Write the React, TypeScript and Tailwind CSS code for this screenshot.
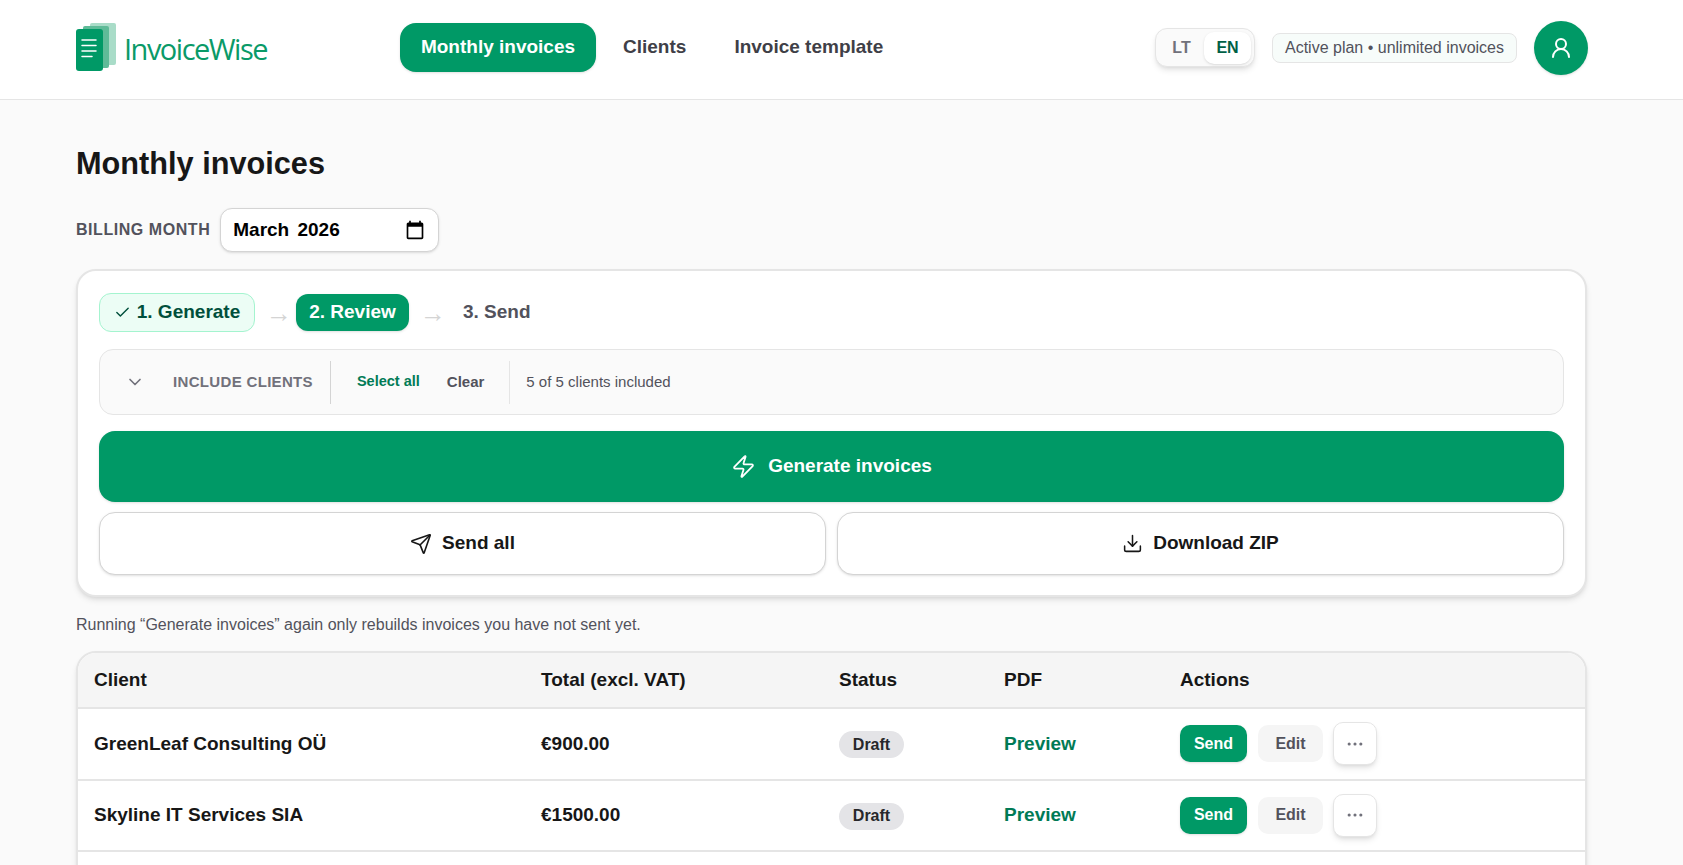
import React from 'react';
import { Check, ChevronDown, Download, Ellipsis, Send, UserRound, Zap } from 'lucide-react';

const rows = [
  { client: 'GreenLeaf Consulting OÜ', total: '€900.00' },
  { client: 'Skyline IT Services SIA', total: '€1500.00' },
];

const Logo = () => (
  <div className="flex items-center gap-[7px]">
    <svg width="41" height="48" viewBox="0 0 41 48" className="mb-[2px]">
      <rect x="14" y="0" width="26" height="42" rx="2" fill="#a9dcc8" />
      <rect x="7" y="3" width="26" height="42" rx="2" fill="#5fbb98" />
      <rect x="0" y="6" width="27" height="42" rx="3" fill="#009966" />
      <path d="M6 17h14M6 22.5h14M6 28h14M6 33.5h10" stroke="#fff" strokeWidth="1.5" strokeLinecap="round" />
    </svg>
    <span className="mt-[1px] font-['Open_Sans',sans-serif] text-[29px] font-medium leading-none tracking-[-1.5px] text-[#0a9a68]">InvoiceWise</span>
  </div>
);

const Header = () => (
  <header className="h-[100px] border-b border-neutral-200 bg-white">
    <div className="ml-[76px] flex h-[95px] w-[1512px] items-center">
      <Logo />
      <nav className="ml-[133px] flex items-center gap-[6px] text-[19px] font-bold text-zinc-700">
        <a className="flex h-[49px] w-[196px] items-center justify-center rounded-[16px] bg-emerald-600 text-white shadow-sm">Monthly invoices</a>
        <a className="px-[21px]">Clients</a>
        <a className="px-[21px]">Invoice template</a>
      </nav>
      <div className="ml-auto flex items-center">
        <div className="flex h-[39px] w-[100px] items-center rounded-[12px] border border-neutral-200 bg-neutral-50 p-[3px] text-[16px] font-bold shadow-md">
          <span className="w-[47px] text-center text-zinc-500">LT</span>
          <span className="flex h-[32px] w-[49px] items-center justify-center rounded-[10px] bg-white text-emerald-800 shadow-sm">EN</span>
        </div>
        <div className="ml-[17px] flex h-[30px] w-[245px] items-center justify-center rounded-[8px] border border-neutral-200 bg-[#f7fcfa] text-[16px] text-zinc-600">Active plan • unlimited invoices</div>
        <div className="ml-[17px] flex h-[54px] w-[54px] items-center justify-center rounded-full bg-emerald-600 text-white shadow-sm">
          <UserRound size={24} strokeWidth={2} />
        </div>
      </div>
    </div>
  </header>
);

const Arrow = () => (
  <span className="mx-[11px] w-[19px] text-center text-[26px] font-normal leading-none text-neutral-300">→</span>
);

const Stepper = () => (
  <div className="flex h-[39px] items-center text-[19px] font-bold">
    <div className="flex h-[39px] w-[156px] items-center justify-center gap-[6px] rounded-[12px] border border-emerald-200 bg-emerald-50 text-emerald-900">
      <Check size={17} strokeWidth={2} />
      <span>1. Generate</span>
    </div>
    <Arrow />
    <div className="flex h-[37px] w-[113px] items-center justify-center rounded-[12px] bg-emerald-600 text-white shadow-sm">2. Review</div>
    <Arrow />
    <div className="ml-[13px] text-zinc-600">3. Send</div>
  </div>
);

const IncludeClients = () => (
  <div className="mt-[17px] flex h-[66px] items-center rounded-[14px] border border-neutral-200 bg-neutral-50">
    <ChevronDown size={20} className="ml-[25px] text-zinc-500" />
    <span className="ml-[28px] text-[15px] font-bold tracking-[0.33px] text-zinc-500">INCLUDE CLIENTS</span>
    <div className="ml-[17px] h-[43px] w-px bg-neutral-300" />
    <span className="ml-[26px] text-[14.5px] font-bold text-emerald-700">Select all</span>
    <span className="ml-[27px] text-[15px] font-bold text-zinc-600">Clear</span>
    <div className="ml-[25px] h-[43px] w-px bg-neutral-200" />
    <span className="ml-[16px] text-[15px] text-zinc-600">5 of 5 clients included</span>
  </div>
);

const MoreButton = () => (
  <button className="flex h-[43px] w-[44px] items-center justify-center rounded-[10px] border border-neutral-200 bg-white text-zinc-500 shadow-md">
    <Ellipsis size={20} strokeWidth={1.75} />
  </button>
);

const Actions = () => (
  <div className="flex items-center">
    <button className="h-[37px] w-[67px] rounded-[10px] bg-emerald-600 text-[16px] font-bold text-white shadow-sm">Send</button>
    <button className="ml-[11px] mr-[10px] h-[37px] w-[65px] rounded-[10px] bg-neutral-100 text-[16px] font-bold text-zinc-600">Edit</button>
    <MoreButton />
  </div>
);

const CalendarIcon = () => (
  <svg width="20" height="20" viewBox="0 0 24 24" fill="currentColor">
    <path d="M20 3h-1V1h-2v2H7V1H5v2H4c-1.1 0-2 .9-2 2v16c0 1.1.9 2 2 2h16c1.1 0 2-.9 2-2V5c0-1.1-.9-2-2-2zm0 18H4V8h16v13z" />
  </svg>
);

export default function App() {
  return (
    <div className="h-screen overflow-hidden bg-neutral-50 font-['Liberation_Sans',Arial,sans-serif] text-neutral-900">
      <Header />
      <main className="ml-[76px] w-[1511px]">
        <h1 className="mt-[44px] text-[30.7px] font-bold leading-[40px]">Monthly invoices</h1>
        <div className="mt-[24px] flex items-center gap-[10px]">
          <label className="text-[16px] font-bold tracking-[0.55px] text-zinc-600">BILLING MONTH</label>
          <div className="flex h-[44px] w-[219px] items-center justify-between rounded-[12px] border border-neutral-300 bg-white pl-[12px] pr-[13px] text-[19px] font-bold text-black shadow-sm [word-spacing:3px]">
            March 2026
            <CalendarIcon />
          </div>
        </div>

        <section className="mt-[17px] h-[328px] rounded-[20px] border-2 border-neutral-200 bg-white px-[21px] pt-[22px] shadow-md">
          <Stepper />
          <IncludeClients />
          <button className="mt-[16px] flex h-[71px] w-full items-center justify-center gap-[12px] rounded-[16px] bg-emerald-600 text-[19px] font-bold text-white shadow-sm">
            <Zap size={25} strokeWidth={1.75} />
            Generate invoices
          </button>
          <div className="mt-[10px] grid grid-cols-2 gap-[11px]">
            <button className="flex h-[63px] items-center justify-center gap-[10px] rounded-[16px] border border-neutral-300 bg-white text-[19px] font-bold shadow-sm">
              <Send size={22} strokeWidth={1.75} />
              Send all
            </button>
            <button className="flex h-[63px] items-center justify-center gap-[10px] rounded-[16px] border border-neutral-300 bg-white text-[19px] font-bold shadow-sm">
              <Download size={21} strokeWidth={1.75} />
              Download ZIP
            </button>
          </div>
        </section>

        <p className="mt-[18px] text-[16px] leading-[20px] text-zinc-600">Running “Generate invoices” again only rebuilds invoices you have not sent yet.</p>

        <div className="mt-[16px] overflow-hidden rounded-[20px] border-2 border-neutral-200 bg-white shadow-md">
          <table className="w-full table-fixed text-left text-[19px] font-bold">
            <thead className="bg-neutral-100">
              <tr className="h-[55px] border-b-2 border-neutral-200">
                <th className="w-[447px] pl-[16px]">Client</th>
                <th className="w-[298px] pl-[16px]">Total (excl. VAT)</th>
                <th className="w-[165px] pl-[16px]">Status</th>
                <th className="w-[176px] pl-[16px]">PDF</th>
                <th className="pl-[16px]">Actions</th>
              </tr>
            </thead>
            <tbody>
              {rows.map((row) => (
                <tr key={row.client} className="h-[71.5px] border-b-2 border-neutral-200">
                  <td className="pl-[16px]">{row.client}</td>
                  <td className="pl-[16px]">{row.total}</td>
                  <td className="pl-[16px]">
                    <span className="inline-flex h-[27px] w-[65px] items-center justify-center rounded-full bg-zinc-200 text-[16px] text-zinc-800">Draft</span>
                  </td>
                  <td className="pl-[16px] text-emerald-700">Preview</td>
                  <td className="pl-[16px]"><Actions /></td>
                </tr>
              ))}
              <tr className="h-[72px]">
                <td colSpan={4} />
                <td className="pl-[169px]"><MoreButton /></td>
              </tr>
            </tbody>
          </table>
        </div>
      </main>
    </div>
  );
}
